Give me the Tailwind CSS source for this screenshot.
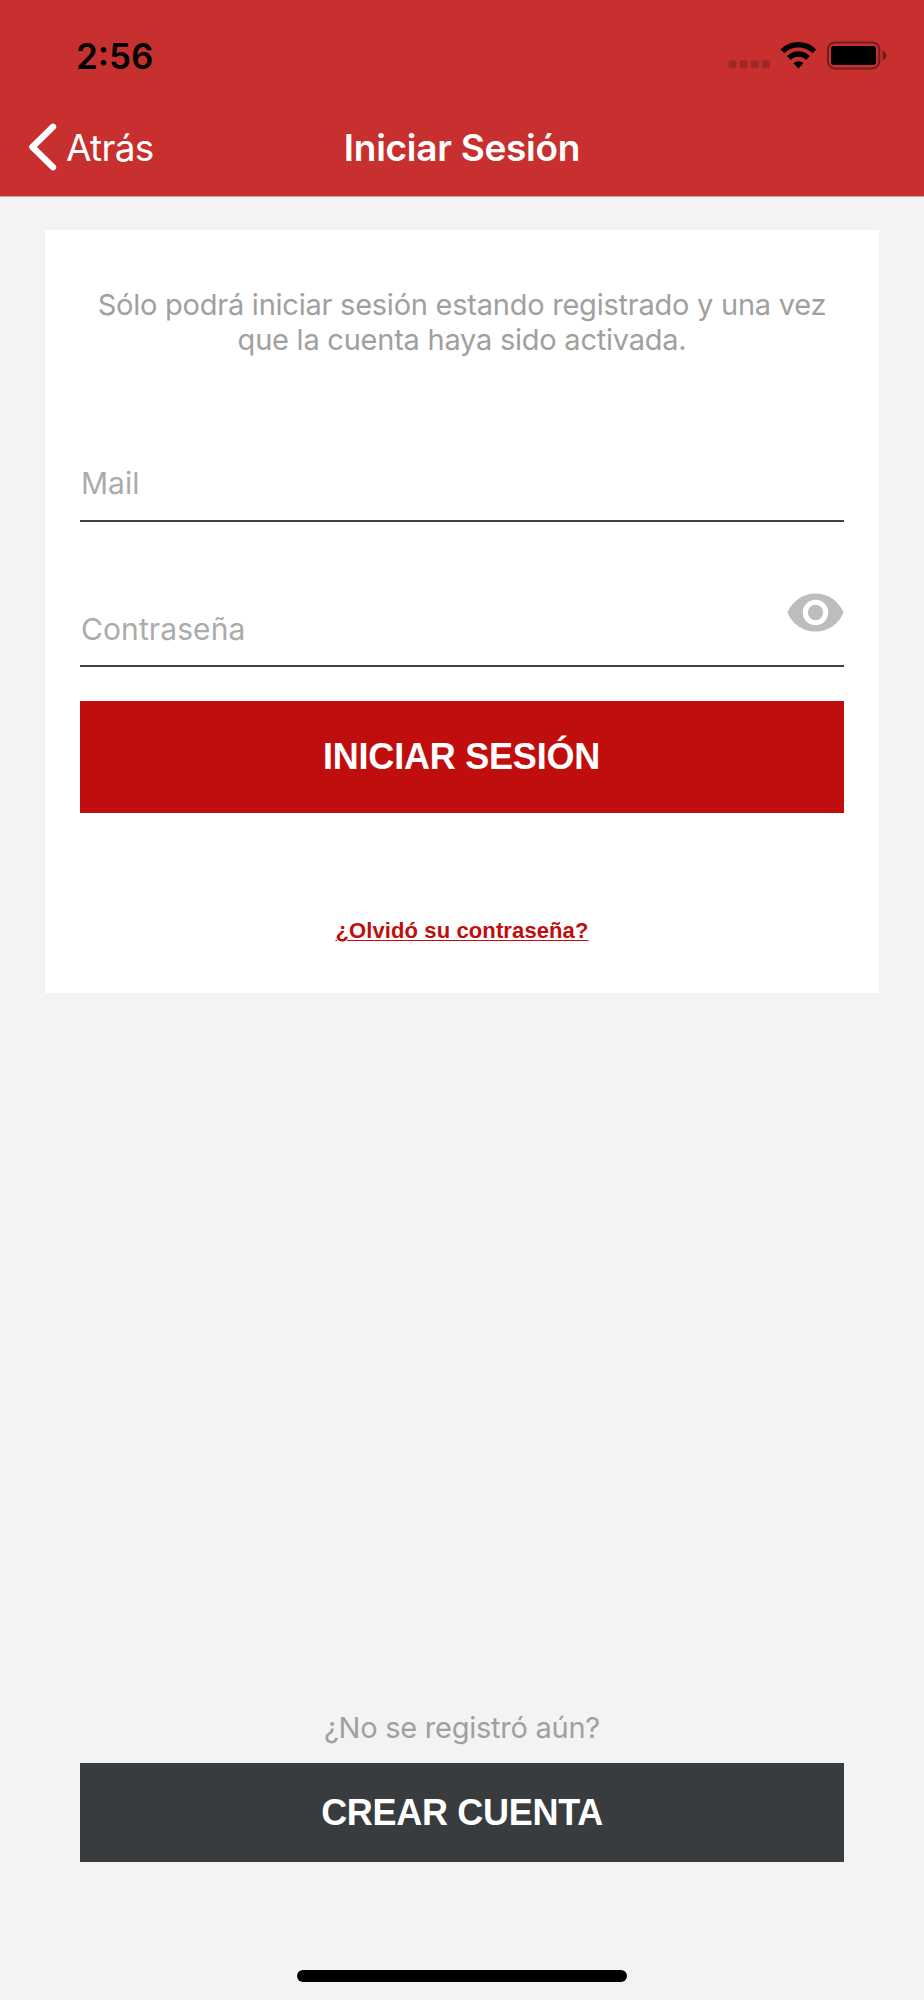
<!DOCTYPE html>
<html lang="es">
<head>
<meta charset="utf-8">
<title>Iniciar Sesión</title>
<script src="https://cdn.jsdelivr.net/npm/@tailwindcss/browser@4"></script>
</head>
<body class="bg-[#f3f3f3]">
<div class="flex h-[2000px] w-[924px] flex-col overflow-hidden bg-[#f3f3f3] font-['Inter',sans-serif]">
  <header class="h-[197px] shrink-0 border-b border-[#c9a3a3] bg-[#c8302f]">
    <div class="flex h-[98px] items-start justify-between pt-[36px] pr-[37px] pl-[76px]">
      <span class="text-[35px] leading-[40px] font-semibold text-black">2:56</span>
      <svg class="mt-[4px] h-[30px] w-[160px]" viewBox="727 40 160 30">
        <g fill="#a02726"><rect x="728.5" y="60.3" width="8" height="8" rx="2.2"/><rect x="739.7" y="60.3" width="8" height="8" rx="2.2"/><rect x="750.8" y="60.3" width="8" height="8" rx="2.2"/><rect x="762" y="60.3" width="8" height="8" rx="2.2"/></g>
        <g fill="none" stroke="#000" stroke-width="5.4"><path d="M782.4 51.3A22.8 22.8 0 0 1 814.4 51.3"/><path d="M788.8 58A13.6 13.6 0 0 1 808 58"/></g>
        <path d="M793.4 63.3A7.2 7.2 0 0 1 803.4 63.3L798.4 68.4Z"/>
        <rect x="827.9" y="42.4" width="51.4" height="26" rx="6.8" fill="none" stroke="#741c1c" stroke-width="2"/>
        <rect x="831" y="46" width="45" height="19" rx="3"/>
        <path d="M882.6 50.6Q886.3 52 886.3 55.5T882.6 60.4Z" fill="#741c1c"/>
      </svg>
    </div>
    <nav class="grid h-[98px] grid-cols-3 items-center text-[37px] leading-[44px] text-white">
      <div class="flex items-center pl-[28px]">
        <svg class="h-[48px] w-[29px]" viewBox="28 123.5 29 48" fill="none" stroke="#fff" stroke-width="6.4" stroke-linecap="round" stroke-linejoin="round"><path d="M53 127.3L32.4 147.5L53 167.7"/></svg>
        <span class="ml-[9px] pt-[2px] tracking-[-0.7px]">Atrás</span>
      </div>
      <h1 class="pt-[2px] text-center font-semibold tracking-[-0.28px] whitespace-nowrap">Iniciar Sesión</h1>
    </nav>
  </header>
  <main class="mx-[45px] mt-[33px] flex h-[763px] shrink-0 flex-col bg-white px-[35px] pt-[58px]">
    <p class="text-center text-[29px] leading-[34.6px] tracking-[-0.24px] whitespace-nowrap text-[#a0a0a0]">Sólo podrá iniciar sesión estando registrado y una vez<br>que la cuenta haya sido activada.</p>
    <label class="mt-[106px] flex h-[59px] items-start border-b-2 border-[#3b4145] pl-px text-[30px] leading-[40px] text-[#ababab]">Mail</label>
    <label class="mt-[67px] flex h-[78px] items-start justify-between border-b-2 border-[#3b4145] text-[30px] leading-[40px] text-[#ababab]">
      <span class="mt-[20px] ml-px tracking-[0.1px]">Contraseña</span>
      <svg class="mt-[4px] h-[39px] w-[57px]" viewBox="0.85 4.35 22.3 15.3" fill="#bdbdbd"><path d="M12 4.5C7 4.5 2.73 7.61 1 12c1.73 4.39 6 7.5 11 7.5s9.270-3.11 11-7.5c-1.73-4.39-6-7.500-11-7.500zM12 17a5 5 0 1 1 0-10 5 5 0 0 1 0 10zm0-8a3 3 0 1 0 0 6 3 3 0 0 0 0-6z"/></svg>
    </label>
    <button class="mt-[34px] h-[112px] shrink-0 bg-[#c00d0d] pr-px font-['Liberation_Sans',sans-serif] text-[36px] leading-[40px] font-bold tracking-[-0.22px] text-white">INICIAR SESIÓN</button>
    <a class="mt-[103px] text-center font-['Liberation_Sans',sans-serif] text-[22px] leading-[30px] font-bold tracking-[0.11px] text-[#c00d0d] underline decoration-1 underline-offset-2">¿Olvidó su contraseña?</a>
  </main>
  <footer class="mt-auto flex flex-col px-[80px] pb-[18px]">
    <p class="text-center text-[29px] leading-[36px] tracking-[-0.25px] text-[#a0a0a0]">¿No se registró aún?</p>
    <button class="mt-[17px] h-[99px] bg-[#383c3f] font-['Liberation_Sans',sans-serif] text-[36px] leading-[40px] font-bold tracking-[-0.3px] text-white">CREAR CUENTA</button>
    <div class="mx-auto mt-[108px] h-[12px] w-[330px] rounded-full bg-black"></div>
  </footer>
</div>
</body>
</html>
